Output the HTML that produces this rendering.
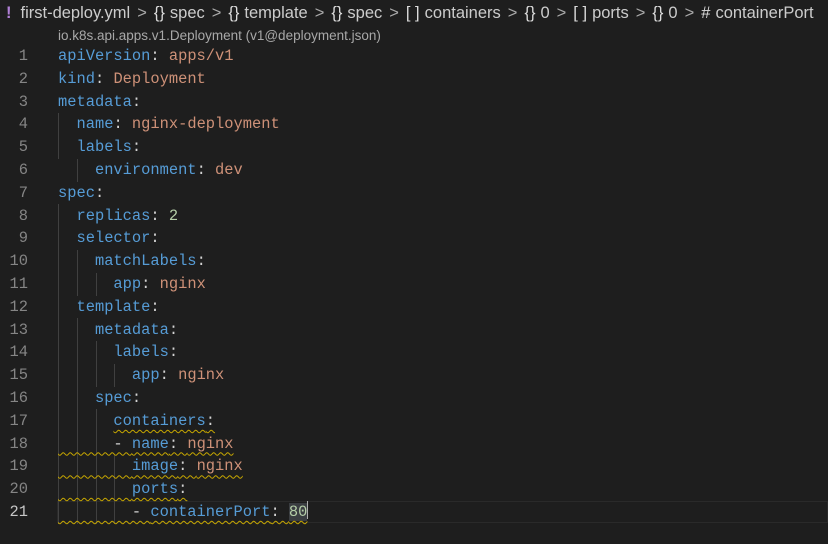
<!DOCTYPE html>
<html><head><meta charset="utf-8"><style>
html,body{margin:0;padding:0;background:#1e1e1e;width:828px;height:544px;overflow:hidden;position:relative}
.bc{position:absolute;left:6px;top:4px;font:16.5px "Liberation Sans",sans-serif;color:#cccccc;white-space:nowrap}
.bc .ic{color:#dcdcdc;margin-right:5px}
.bc .ex{color:#b180d7;font-weight:bold;margin-right:9px}
.bc .sep{color:#aaa;margin:0 7px}
.sub{position:absolute;left:58px;top:28px;font:13.5px "Liberation Sans",sans-serif;color:#a8a8a8;white-space:nowrap}
.ln{position:absolute;left:0;width:28px;text-align:right;font:15.4px "Liberation Mono",monospace;color:#858585;height:22.8px;line-height:22.8px}
.ln.cur{color:#c6c6c6}
.code{position:absolute;left:58px;font:15.4px "Liberation Mono",monospace;color:#d4d4d4;white-space:pre;height:22.8px;line-height:22.8px}
.k{color:#569cd6}.v{color:#ce9178}.n{color:#b5cea8}.p{color:#d4d4d4}
.w{text-decoration:underline wavy #c8a800;text-decoration-thickness:1px;text-underline-offset:4px}
.g{position:absolute;width:1px;background:#404040}
.curline{position:absolute;left:57px;top:501px;width:771px;height:22px;border:1px solid #2a2a2a;box-sizing:border-box}
</style></head><body>
<div class="bc"><span class="ex">!</span>first-deploy.yml<span class="sep">&gt;</span><span class="ic">{}</span>spec<span class="sep">&gt;</span><span class="ic">{}</span>template<span class="sep">&gt;</span><span class="ic">{}</span>spec<span class="sep">&gt;</span><span class="ic">[ ]</span>containers<span class="sep">&gt;</span><span class="ic">{}</span>0<span class="sep">&gt;</span><span class="ic">[ ]</span>ports<span class="sep">&gt;</span><span class="ic">{}</span>0<span class="sep">&gt;</span><span class="ic">#</span>containerPort</div>
<div class="sub">io.k8s.api.apps.v1.Deployment (v1@deployment.json)</div>
<div class="curline"></div>

<div class="g" style="left:58px;top:113px;height:46px"></div>
<div class="g" style="left:77px;top:159px;height:23px"></div>
<div class="g" style="left:58px;top:204px;height:320px"></div>
<div class="g" style="left:77px;top:250px;height:46px"></div>
<div class="g" style="left:96px;top:273px;height:23px"></div>
<div class="g" style="left:77px;top:318px;height:206px"></div>
<div class="g" style="left:96px;top:341px;height:46px"></div>
<div class="g" style="left:114px;top:364px;height:23px"></div>
<div class="g" style="left:96px;top:409px;height:115px"></div>
<div class="g" style="left:114px;top:455px;height:69px"></div>

<div class="ln" style="top:45px">1</div><div class="code" style="top:45px"><span class="k">apiVersion</span>: <span class="v">apps/v1</span></div>
<div class="ln" style="top:67.8px">2</div><div class="code" style="top:67.8px"><span class="k">kind</span>: <span class="v">Deployment</span></div>
<div class="ln" style="top:90.6px">3</div><div class="code" style="top:90.6px"><span class="k">metadata</span>:</div>
<div class="ln" style="top:113.4px">4</div><div class="code" style="top:113.4px">  <span class="k">name</span>: <span class="v">nginx-deployment</span></div>
<div class="ln" style="top:136.2px">5</div><div class="code" style="top:136.2px">  <span class="k">labels</span>:</div>
<div class="ln" style="top:159px">6</div><div class="code" style="top:159px">    <span class="k">environment</span>: <span class="v">dev</span></div>
<div class="ln" style="top:181.8px">7</div><div class="code" style="top:181.8px"><span class="k">spec</span>:</div>
<div class="ln" style="top:204.6px">8</div><div class="code" style="top:204.6px">  <span class="k">replicas</span>: <span class="n">2</span></div>
<div class="ln" style="top:227.4px">9</div><div class="code" style="top:227.4px">  <span class="k">selector</span>:</div>
<div class="ln" style="top:250.2px">10</div><div class="code" style="top:250.2px">    <span class="k">matchLabels</span>:</div>
<div class="ln" style="top:273px">11</div><div class="code" style="top:273px">      <span class="k">app</span>: <span class="v">nginx</span></div>
<div class="ln" style="top:295.8px">12</div><div class="code" style="top:295.8px">  <span class="k">template</span>:</div>
<div class="ln" style="top:318.6px">13</div><div class="code" style="top:318.6px">    <span class="k">metadata</span>:</div>
<div class="ln" style="top:341.4px">14</div><div class="code" style="top:341.4px">      <span class="k">labels</span>:</div>
<div class="ln" style="top:364.2px">15</div><div class="code" style="top:364.2px">        <span class="k">app</span>: <span class="v">nginx</span></div>
<div class="ln" style="top:387px">16</div><div class="code" style="top:387px">    <span class="k">spec</span>:</div>
<div class="ln" style="top:409.8px">17</div><div class="code" style="top:409.8px">      <span class="w"><span class="k">containers</span>:</span></div>
<div class="ln" style="top:432.6px">18</div><div class="code" style="top:432.6px"><span class="w">      - <span class="k">name</span>: <span class="v">nginx</span></span></div>
<div class="ln" style="top:455.4px">19</div><div class="code" style="top:455.4px"><span class="w">        <span class="k">image</span>: <span class="v">nginx</span></span></div>
<div class="ln" style="top:478.2px">20</div><div class="code" style="top:478.2px"><span class="w">        <span class="k">ports</span>:</span></div>
<div class="ln cur" style="top:501px">21</div><div class="code" style="top:501px"><span class="w">        - <span class="k">containerPort</span>: <span class="n" style="background:#3a3d41">80</span></span><span style="display:inline-block;width:1px;height:18px;background:#aeafad;vertical-align:-3px"></span></div>
</body></html>
